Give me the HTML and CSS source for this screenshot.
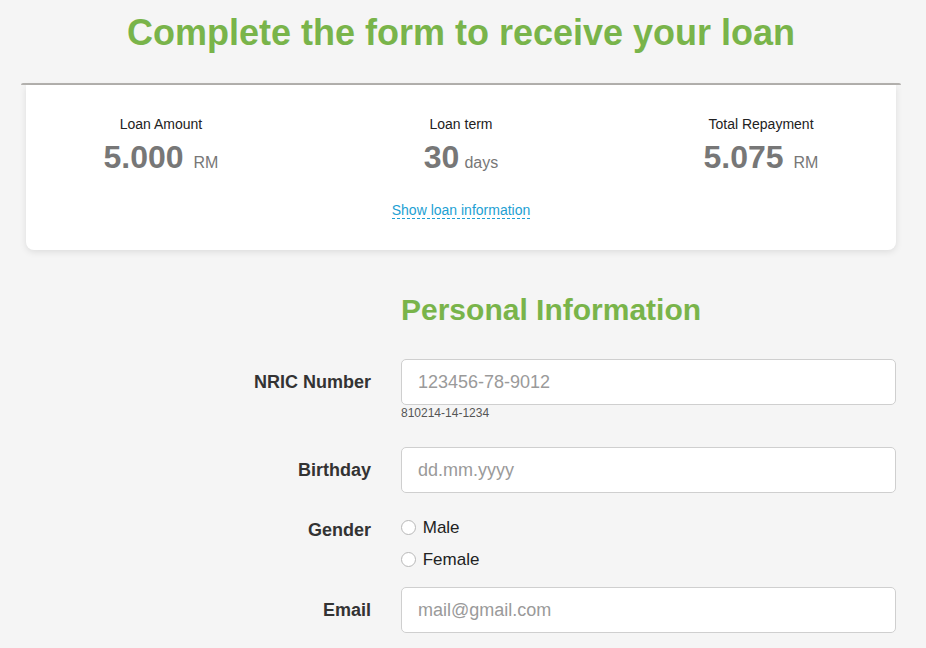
FILE: index.html
```html
<!DOCTYPE html>
<html lang="en">
<head>
  <meta charset="UTF-8">
  <title>Loan Application</title>
  <meta name="viewport" content="width=device-width, initial-scale=1.0">
  <link rel="stylesheet" href="styles.css">
</head>
<body>
  <div class="container">
    <h1>Complete the form to receive your loan</h1>

    <div class="summary-bar"></div>
    <div class="summary">
      <div class="summary-row">
        <div class="summary-item">
          <div class="summary-label">Loan Amount</div>
          <div class="summary-value">5.000 <span class="unit">RM</span></div>
        </div>
        <div class="summary-item">
          <div class="summary-label">Loan term</div>
          <div class="summary-value">30<span class="unit unit-tight">days</span></div>
        </div>
        <div class="summary-item">
          <div class="summary-label">Total Repayment</div>
          <div class="summary-value">5.075 <span class="unit">RM</span></div>
        </div>
      </div>
      <div class="summary-link">
        <a href="#">Show loan information</a>
      </div>
    </div>

    <form class="loan-form">
      <h2>Personal Information</h2>

      <div class="form-row row-nric">
        <label for="nric">NRIC Number</label>
        <div class="field">
          <input type="text" id="nric" placeholder="123456-78-9012">
          <div class="hint">810214-14-1234</div>
        </div>
      </div>

      <div class="form-row row-birthday">
        <label for="birthday">Birthday</label>
        <div class="field">
          <input type="text" id="birthday" placeholder="dd.mm.yyyy">
        </div>
      </div>

      <div class="form-row row-gender">
        <label class="label-gender">Gender</label>
        <div class="field">
          <label class="radio"><input type="radio" name="gender" value="male"> Male</label>
          <label class="radio"><input type="radio" name="gender" value="female"> Female</label>
        </div>
      </div>

      <div class="form-row row-email">
        <label for="email">Email</label>
        <div class="field">
          <input type="email" id="email" placeholder="mail@gmail.com">
        </div>
      </div>
    </form>
  </div>
</body>
</html>
```

FILE: styles.css
```css
body {
  font-family: 'Liberation Sans', Arial, sans-serif;
  background: #f5f5f5;
  color: #333;
  margin: 0;
  padding: 0;
}
.container {
  width: 880px;
  margin-left: 21px;
  padding-top: 12px;
}
h1 {
  margin: 0;
  text-align: center;
  font-size: 36px;
  line-height: 42px;
  font-weight: bold;
  color: #79b44a;
}
.summary-bar {
  margin-top: 29px;
  height: 2px;
  background: #b4b2af;
  border-radius: 2px 2px 0 0;
}
.summary {
  margin: 0 5px;
  background: #fff;
  border-radius: 0 0 8px 8px;
  box-shadow: 0 2px 7px rgba(0, 0, 0, 0.1);
  padding: 29px 0 30px;
}
.summary-row {
  display: grid;
  grid-template-columns: 1fr 1fr 1fr;
  margin: 0 -15px;
}
.summary-item {
  text-align: center;
}
.summary-label {
  font-size: 14px;
  line-height: 20px;
  color: #222;
}
.summary-value {
  font-size: 32px;
  line-height: 46px;
  font-weight: bold;
  color: #777;
}
.summary-value .unit {
  font-size: 16px;
  line-height: 1;
  font-weight: normal;
  margin-left: 1px;
}
.summary-value .unit-tight {
  margin-left: 5px;
}
.summary-link {
  margin-top: 20px;
  text-align: center;
  font-size: 14px;
  line-height: 20px;
}
.summary-link a {
  color: #1d9fd3;
  text-decoration: none;
  border-bottom: 1px dashed #1d9fd3;
}
.loan-form {
  margin: 0 5px;
}
h2 {
  margin: 42px 0 0 375px;
  font-size: 30px;
  line-height: 36px;
  font-weight: bold;
  color: #79b44a;
}
.form-row {
  display: grid;
  grid-template-columns: 345px 495px;
  column-gap: 30px;
}
.form-row > label {
  text-align: right;
  font-size: 18px;
  font-weight: bold;
  line-height: 46px;
  color: #333;
}
.row-nric {
  margin-top: 31px;
}
.row-birthday {
  margin-top: 26px;
}
.row-gender {
  margin-top: 19px;
}
.row-email {
  margin-top: 11px;
}
.form-row input[type="text"],
.form-row input[type="email"] {
  display: block;
  width: 100%;
  height: 46px;
  box-sizing: border-box;
  padding: 0 16px;
  border: 1px solid #cfcfcf;
  border-radius: 5px;
  background: #fff;
  font-family: inherit;
  font-size: 18px;
  color: #333;
}
.form-row input::placeholder {
  color: #9a9a9a;
}
.hint {
  font-size: 12px;
  line-height: 16px;
  color: #555;
}
.form-row > .label-gender {
  line-height: 32px;
  padding-top: 2px;
}
.radio {
  display: block;
  font-size: 17px;
  line-height: 32px;
  color: #222;
}
.radio input[type="radio"] {
  appearance: none;
  -webkit-appearance: none;
  display: inline-block;
  vertical-align: middle;
  width: 15px;
  height: 15px;
  margin: -2px 2px 0 0;
  border: 1px solid #b8b8b8;
  border-radius: 50%;
  background: #fff;
  box-sizing: border-box;
}
```
